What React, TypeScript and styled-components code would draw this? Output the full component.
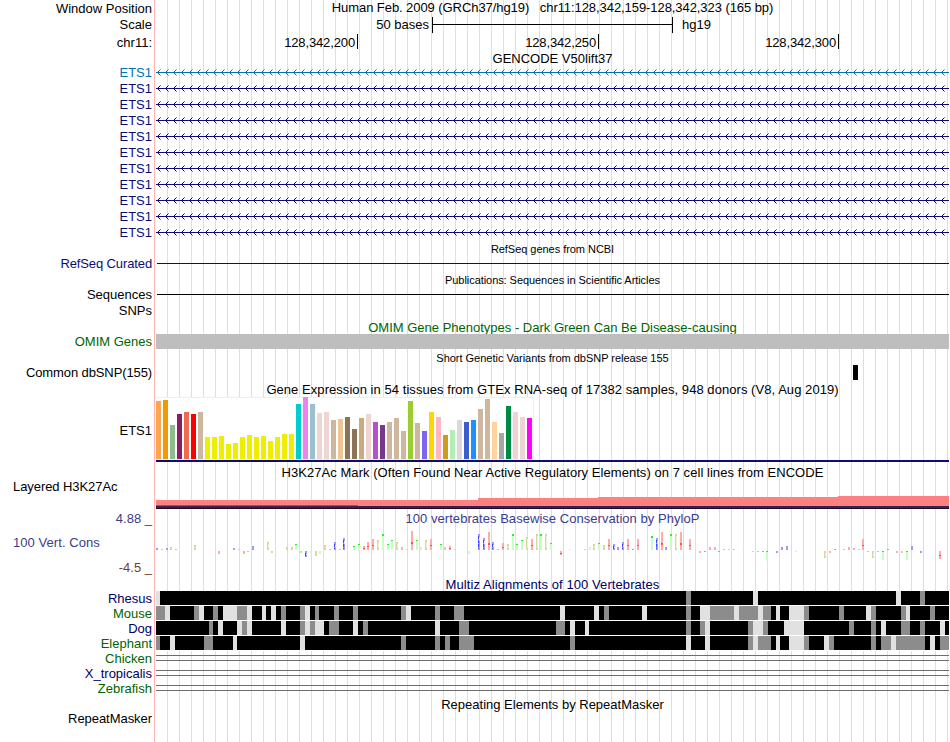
import React from "react";
import styled, { createGlobalStyle } from "styled-components";

const GlobalStyle = createGlobalStyle`
  body { margin: 0; background: #fff; }
`;

const NAVY = "#0c0c78";
const GREEN = "#006400";
const LEFT = 156;
const WIDTH = 793;
const BASE = WIDTH / 165;

const Browser = styled.main`
  width: 950px;
  height: 742px;
  overflow: hidden;
  display: flex;
  flex-direction: column;
  font: 13px "Liberation Sans", Arial, sans-serif;
  color: #000;
  background:
    linear-gradient(90deg, #fff 154px, #ffb4b4 154px, #ffb4b4 155px, #fff 155px) 0 0 / 160px 100% no-repeat,
    linear-gradient(90deg, #dcdcf5 1px, transparent 1px) 11px 0 / 12px 100% repeat-x;
`;

const Row = styled.section<{ $h: number }>`
  display: grid;
  grid-template-columns: 152px 793px;
  column-gap: 4px;
  flex: none;
  height: ${(p) => p.$h}px;
`;

const Label = styled.div<{ $mid: number; $color?: string; $left?: boolean; $spacing?: number }>`
  line-height: ${(p) => p.$mid * 2}px;
  letter-spacing: ${(p) => p.$spacing ?? 0}px;
  color: ${(p) => p.$color ?? "#000"};
  text-align: ${(p) => (p.$left ? "left" : "right")};
  padding-left: ${(p) => (p.$left ? 13 : 0)}px;
  white-space: nowrap;
`;

const Title = styled.div<{ $mid: number; $color?: string; $small?: boolean; $spacing?: number }>`
  line-height: ${(p) => p.$mid * 2}px;
  color: ${(p) => p.$color ?? "#000"};
  font-size: ${(p) => (p.$small ? 11 : 13)}px;
  letter-spacing: ${(p) => p.$spacing ?? 0}px;
  text-align: center;
  white-space: pre;
`;

const Chart = styled.svg`
  display: block;
  shape-rendering: crispEdges;
`;

const Ruler = styled.div`
  display: flex;
  line-height: 18px;
  white-space: nowrap;
`;

const ScaleText = styled.span<{ $w?: number }>`
  box-sizing: border-box;
  width: ${(p) => (p.$w ? `${p.$w}px` : "auto")};
  text-align: right;
  padding: 0 3px 0 9px;
`;

const ScaleBar = styled.div`
  box-sizing: border-box;
  width: 241px;
  height: 16px;
  margin-top: 1px;
  border: solid #000;
  border-width: 0 1px;
  background: linear-gradient(#000, #000) 0 7px / 100% 1px no-repeat;
`;

const Tick = styled.span<{ $w: number }>`
  box-sizing: border-box;
  width: ${(p) => p.$w}px;
  height: 15px;
  margin-top: 1px;
  line-height: 17px;
  letter-spacing: -0.13px;
  text-align: right;
  padding-right: 2px;
  border-right: 1px solid #000;
`;

const Band = styled.div`
  height: 15px;
  background: #bebebe;
`;

const SideLabels = styled.div`
  display: flex;
  flex-direction: column;
`;

const LabelSlot = styled.div<{ $h: number }>`
  height: ${(p) => p.$h}px;
`;

function TitleRow(p: { h: number; mid: number; text: string; color?: string; small?: boolean; spacing?: number; label?: string; labelMid?: number }) {
  return (
    <Row $h={p.h}>
      <Label $mid={p.labelMid ?? p.mid}>{p.label}</Label>
      <Title $mid={p.mid} $color={p.color} $small={p.small} $spacing={p.spacing}>{p.text}</Title>
    </Row>
  );
}

function Track({ h, children }: { h: number; children?: React.ReactNode }) {
  return <Chart width={WIDTH} height={h} viewBox={`${LEFT} 0 ${WIDTH} ${h}`}>{children}</Chart>;
}

function GeneRow({ color }: { color: string }) {
  const arrows = Array.from({ length: 99 }, (_, i) => 157 + i * 8);
  return (
    <Row $h={16}>
      <Label $mid={8.5} $color={color}>ETS1</Label>
      <Track h={16}>
        <rect x={156} y={8} width={793} height={1} fill={color} />
        {arrows.map((x) => (
          <g key={x} fill={color}>
            <path d={`M${x + 1} 7h1v3h-1zM${x + 2} 6h1v1h-1zM${x + 2} 10h1v1h-1z`} />
            <path d={`M${x + 3} 5h1v1h-1zM${x + 3} 11h1v1h-1z`} opacity={0.5} />
          </g>
        ))}
      </Track>
    </Row>
  );
}

const Y = "#eeee00";
const TISSUES: [number, string][] = [
  [58, "#ffa54f"], [59, "#ee9a00"], [34, "#8fbc8f"], [45, "#8b1c62"], [47, "#ee6a50"], [45, "#ff0000"], [47, "#cdb79e"],
  [22, Y], [22, Y], [23, Y], [15, Y], [16, Y], [22, Y], [24, Y], [22, Y], [23, Y], [18, Y], [22, Y], [25, Y], [25, Y],
  [55, "#00cdcd"], [62, "#ee82ee"], [55, "#9ac0cd"], [46, "#eed5d2"], [47, "#eed5d2"], [39, "#cdb79e"], [40, "#eec591"], [42, "#8b7355"],
  [30, "#8b7355"], [41, "#cdaa7d"], [45, "#eed5d2"], [37, "#b452cd"], [34, "#7a378b"], [37, "#cdb79e"], [41, "#cdb79e"], [28, "#cdb79e"],
  [58, "#9acd32"], [36, "#cdb79e"], [28, "#7a67ee"], [47, "#ffd700"], [42, "#ffb6c1"], [24, "#cd9b1d"], [29, "#b4eeb4"], [39, "#d9d9d9"],
  [37, "#3a5fcd"], [39, "#1e90ff"], [50, "#cdb79e"], [60, "#cdb79e"], [37, "#ffd39b"], [26, "#a6a6a6"], [53, "#008b45"], [47, "#eed5d2"], [42, "#eed5d2"], [41, "#ff00ff"],
];

// index of the base, height in pixels above (or below) the axis, nucleotide
const CONSERVATION: [number, number, string][] = [
  [0, 2, "G"], [1, 1, "A"], [2, 2, "G"], [3, 3, "C"], [4, 1, "A"], [8, 5, "C"], [13, -3, "A"], [16, 2, "G"], [17, 1, "C"], [18, -3, "A"], [19, -1, "A"], [20, 4, "G"],
  [23, 8, "C"], [24, -2, "C"], [27, 3, "C"], [28, 3, "C"], [29, 6, "T"], [30, -2, "C"], [31, -6, "G"], [32, -2, "T"], [33, -5, "C"], [34, -3, "T"], [35, 5, "C"],
  [36, 1, "A"], [37, 8, "G"], [38, 1, "A"], [39, 12, "G"], [41, 4, "T"], [42, 6, "T"], [43, 4, "A"], [44, 8, "A"], [45, 11, "A"], [46, 10, "C"], [47, 16, "T"],
  [48, 6, "T"], [49, 10, "T"], [50, 8, "C"], [51, 3, "A"], [52, 1, "C"], [53, 19, "A"], [54, 10, "T"], [55, 3, "T"], [56, 10, "C"], [57, 11, "A"], [59, 6, "T"],
  [60, 3, "C"], [61, 4, "A"], [62, 1, "C"], [65, -3, "T"], [67, 16, "G"], [68, 12, "G"], [69, 18, "A"], [70, 8, "G"], [71, 1, "A"], [72, 7, "A"], [73, 6, "C"],
  [74, 16, "T"], [75, 6, "T"], [76, 10, "T"], [77, 13, "C"], [78, 11, "A"], [79, 16, "C"], [80, 16, "T"], [81, 16, "C"], [82, 7, "T"], [84, -4, "A"], [86, 1, "T"],
  [89, 1, "C"], [90, 3, "T"], [91, 6, "C"], [92, 7, "T"], [93, 5, "C"], [94, 11, "A"], [95, 6, "G"], [96, 3, "G"], [97, 8, "G"], [98, 11, "A"], [99, 1, "G"],
  [100, 11, "A"], [103, 14, "T"], [104, 12, "G"], [105, 18, "A"], [106, 3, "G"], [107, 16, "T"], [108, 16, "C"], [109, 18, "A"], [111, 11, "A"], [113, -2, "A"],
  [114, -1, "G"], [115, 3, "A"], [116, 3, "A"], [117, -1, "G"], [118, 1, "A"], [119, 1, "C"], [120, 1, "A"], [122, -1, "T"], [124, -1, "C"], [125, -1, "A"],
  [126, -1, "G"], [127, -10, "T"], [129, -2, "G"], [130, 3, "G"], [131, 4, "G"], [133, -1, "T"], [139, -7, "C"], [140, -2, "A"], [141, 1, "G"], [143, 1, "A"],
  [144, 3, "A"], [145, 2, "A"], [146, 1, "C"], [147, 11, "A"], [148, -1, "A"], [149, -7, "C"], [150, -1, "A"], [151, -9, "T"], [152, 1, "G"], [154, -2, "A"],
  [155, -2, "C"], [156, -9, "T"], [157, 4, "G"], [159, -2, "G"], [163, -8, "A"],
];

function Nucleotide({ x, y, h, base }: { x: number; y: number; h: number; base: string }) {
  if (base === "T") {
    return (
      <g>
        <rect x={x} y={y} width={2} height={h} fill="#c4ffc4" />
        {h > 3 && <rect x={x} y={y} width={2} height={h > 12 ? 2 : 1} fill="#22f322" />}
      </g>
    );
  }
  if (base === "A") {
    return (
      <g>
        <rect x={x} y={y} width={2} height={h} fill="#ffabab" />
        {h > 3 && <rect x={x} y={y + Math.floor(h * 0.62)} width={2} height={h > 12 ? 2 : 1} fill="#ff5050" />}
      </g>
    );
  }
  if (base === "G") {
    return (
      <g fill="#9c9cff">
        <rect x={x} y={y} width={2} height={h} />
        {h > 5 && <path d={`M${x} ${y + 2}v${h - 3}`} stroke="#4343ff" strokeWidth={1} strokeDasharray="3 1" transform="translate(.5 0)" />}
        {h > 5 && <rect x={x + 1} y={y + 3} width={1} height={Math.max(1, Math.floor(h / 4))} fill="#e8e8ff" />}
      </g>
    );
  }
  return (
    <g fill="#d7d79e">
      <rect x={x} y={y} width={2} height={h} />
      {h > 4 && <rect x={x + 1} y={y + 2} width={1} height={h - 4} fill="#efefd2" />}
    </g>
  );
}

type Run = [number, number];
const ALIGNMENTS: { name: string; color: string; gray: Run[]; light: Run[] }[] = [
  { name: "Rhesus", color: "#000064", gray: [[686, 691], [920, 925]], light: [[156, 160], [753, 758], [896, 901]] },
  {
    name: "Mouse", color: GREEN,
    gray: [[156, 165], [194, 199], [213, 218], [237, 247], [281, 286], [300, 305], [315, 319], [334, 339], [353, 358], [401, 406], [435, 440], [454, 464], [604, 609], [686, 691], [710, 734], [739, 758], [763, 771], [804, 809], [839, 844], [871, 876], [901, 906], [930, 935]],
    light: [[165, 170], [199, 204], [223, 237], [247, 252], [262, 266], [271, 276], [305, 310], [406, 411], [560, 565], [594, 599], [642, 647], [700, 710], [734, 739], [758, 763], [776, 780], [789, 804], [866, 871], [906, 910]],
  },
  {
    name: "Dog", color: "#000064",
    gray: [[209, 213], [242, 247], [300, 305], [310, 315], [329, 339], [363, 368], [459, 469], [556, 565], [686, 691], [700, 705], [748, 753], [763, 768], [849, 854], [871, 876], [901, 910], [920, 925]],
    light: [[218, 223], [237, 242], [247, 252], [281, 286], [305, 310], [315, 324], [353, 358], [435, 440], [570, 575], [585, 589], [705, 710], [753, 763], [784, 804], [881, 886], [940, 945]],
  },
  {
    name: "Elephant", color: GREEN,
    gray: [[156, 160], [204, 213], [401, 406], [435, 440], [445, 450], [459, 474], [570, 575], [748, 753], [758, 771], [804, 809], [829, 834], [871, 876], [881, 891], [896, 925], [940, 949]],
    light: [[170, 175], [233, 237], [300, 305], [686, 691], [705, 710], [753, 758], [776, 780], [789, 804], [824, 829], [891, 896], [930, 935]],
  },
];

const UNALIGNED = [["Chicken", GREEN], ["X_tropicalis", "#000064"], ["Zebrafish", GREEN]];

export default function App() {
  return (
    <>
      <GlobalStyle />
      <Browser>
        <TitleRow h={16} mid={8} spacing={-0.07} label="Window Position" labelMid={8.5} text="Human Feb. 2009 (GRCh37/hg19)   chr11:128,342,159-128,342,323 (165 bp)" />
        <Row $h={17}>
          <Label $mid={9}>Scale</Label>
          <Ruler>
            <ScaleText $w={276}>50 bases</ScaleText>
            <ScaleBar />
            <ScaleText>hg19</ScaleText>
          </Ruler>
        </Row>
        <Row $h={17}>
          <Label $mid={9.5}>chr11:</Label>
          <Ruler>
            <Tick $w={202}>128,342,200</Tick>
            <Tick $w={241}>128,342,250</Tick>
            <Tick $w={240}>128,342,300</Tick>
          </Ruler>
        </Row>
        <TitleRow h={14} mid={8.5} text="GENCODE V50lift37" />
        {Array.from({ length: 11 }, (_, i) => (
          <GeneRow key={i} color={i === 0 ? "#0072b2" : NAVY} />
        ))}
        <TitleRow h={16} mid={9} small spacing={-0.04} text="RefSeq genes from NCBI" />
        <Row $h={16}>
          <Label $mid={8} $color={NAVY} $spacing={-0.12}>RefSeq Curated</Label>
          <Track h={16}><rect x={157} y={7} width={792} height={1} fill={NAVY} /></Track>
        </Row>
        <TitleRow h={15} mid={8.5} small spacing={-0.06} text="Publications: Sequences in Scientific Articles" />
        <Row $h={16}>
          <Label $mid={8}>Sequences</Label>
          <Track h={16}><rect x={157} y={7} width={792} height={1} fill="#000" /></Track>
        </Row>
        <Row $h={16}><Label $mid={8}>SNPs</Label></Row>
        <TitleRow h={15} mid={9} color={GREEN} text="OMIM Gene Phenotypes - Dark Green Can Be Disease-causing" />
        <Row $h={15}>
          <Label $mid={8} $color={GREEN}>OMIM Genes</Label>
          <Band />
        </Row>
        <TitleRow h={16} mid={9.5} small spacing={-0.02} text="Short Genetic Variants from dbSNP release 155" />
        <Row $h={16}>
          <Label $mid={8} $spacing={-0.11}>Common dbSNP(155)</Label>
          <Track h={16}><rect x={853} y={0} width={5} height={15} /></Track>
        </Row>
        <TitleRow h={16} mid={9} spacing={0.055} text="Gene Expression in 54 tissues from GTEx RNA-seq of 17382 samples, 948 donors (V8, Aug 2019)" />
        <Row $h={67}>
          <Label $mid={34}>ETS1</Label>
          <Track h={67}>
            <rect x={156} y={0} width={378} height={63} fill="#eee" />
            <rect x={156} y={1} width={377} height={61} fill="#fff" />
            {TISSUES.map(([h, color], i) => (
              <rect key={i} x={156 + i * 7} y={62 - h} width={5} height={h} fill={color} />
            ))}
            <rect x={156} y={63} width={793} height={2} fill={NAVY} />
          </Track>
        </Row>
        <TitleRow h={16} mid={9} spacing={0.05} text="H3K27Ac Mark (Often Found Near Active Regulatory Elements) on 7 cell lines from ENCODE" />
        <Row $h={31}>
          <Label $mid={7} $left $spacing={-0.07}>Layered H3K27Ac</Label>
          <Track h={31}>
            <path d="M156 20H478V18H598V17H838V16H949V29H156z" fill="#ff8080" />
            <rect x={156} y={25} width={202} height={1} fill="#806070" />
            <rect x={156} y={26} width={793} height={3} fill="#3d1e4c" />
            <rect x={838} y={26} width={111} height={2} fill="#2f2950" />
            <rect x={156} y={28} width={793} height={1} fill="#1e0928" />
          </Track>
        </Row>
        <Row $h={66}>
          <SideLabels>
            <LabelSlot $h={24}><Label $mid={7.5} $color="#3c3c8c">4.88 _</Label></LabelSlot>
            <LabelSlot $h={25}><Label $mid={7.5} $color="#3c3c8c" $left $spacing={0.06}>100 Vert. Cons</Label></LabelSlot>
            <Label $mid={8} $color="#783c28">-4.5 _</Label>
          </SideLabels>
          <div>
            <Title $mid={8} $color="#3c3c8c" $spacing={0.04}>100 vertebrates Basewise Conservation by PhyloP</Title>
            <Track h={50}>
              {CONSERVATION.map(([i, v, base]) => (
                <Nucleotide key={i} x={Math.round(LEFT + i * BASE)} y={v > 0 ? 23 - v : 24} h={Math.abs(v)} base={base} />
              ))}
            </Track>
          </div>
        </Row>
        <TitleRow h={14} mid={8} color="#000064" spacing={0.08} text="Multiz Alignments of 100 Vertebrates" />
        {ALIGNMENTS.map((a) => (
          <Row $h={15} key={a.name}>
            <Label $mid={8} $color={a.color}>{a.name}</Label>
            <Track h={15}>
              <rect x={156} y={0} width={793} height={15} fill="#fff" />
              <rect x={156} y={0} width={793} height={14} />
              {a.gray.map(([s, e]) => <rect key={s} x={s} y={0} width={e - s} height={14} fill="#8c8c8c" />)}
              {a.light.map(([s, e]) => <rect key={s} x={s} y={0} width={e - s} height={14} fill="#e1e1e1" />)}
            </Track>
          </Row>
        ))}
        {UNALIGNED.map(([name, color]) => (
          <Row $h={15} key={name}>
            <Label $mid={8} $color={color}>{name}</Label>
            <Track h={15}>
              <path d="M156 4h793v1h-793zM156 9h793v1h-793z" fill="#6e6e6e" />
            </Track>
          </Row>
        ))}
        <TitleRow h={15} mid={9} text="Repeating Elements by RepeatMasker" />
        <Row $h={16}><Label $mid={8} $spacing={-0.05}>RepeatMasker</Label></Row>
      </Browser>
    </>
  );
}
